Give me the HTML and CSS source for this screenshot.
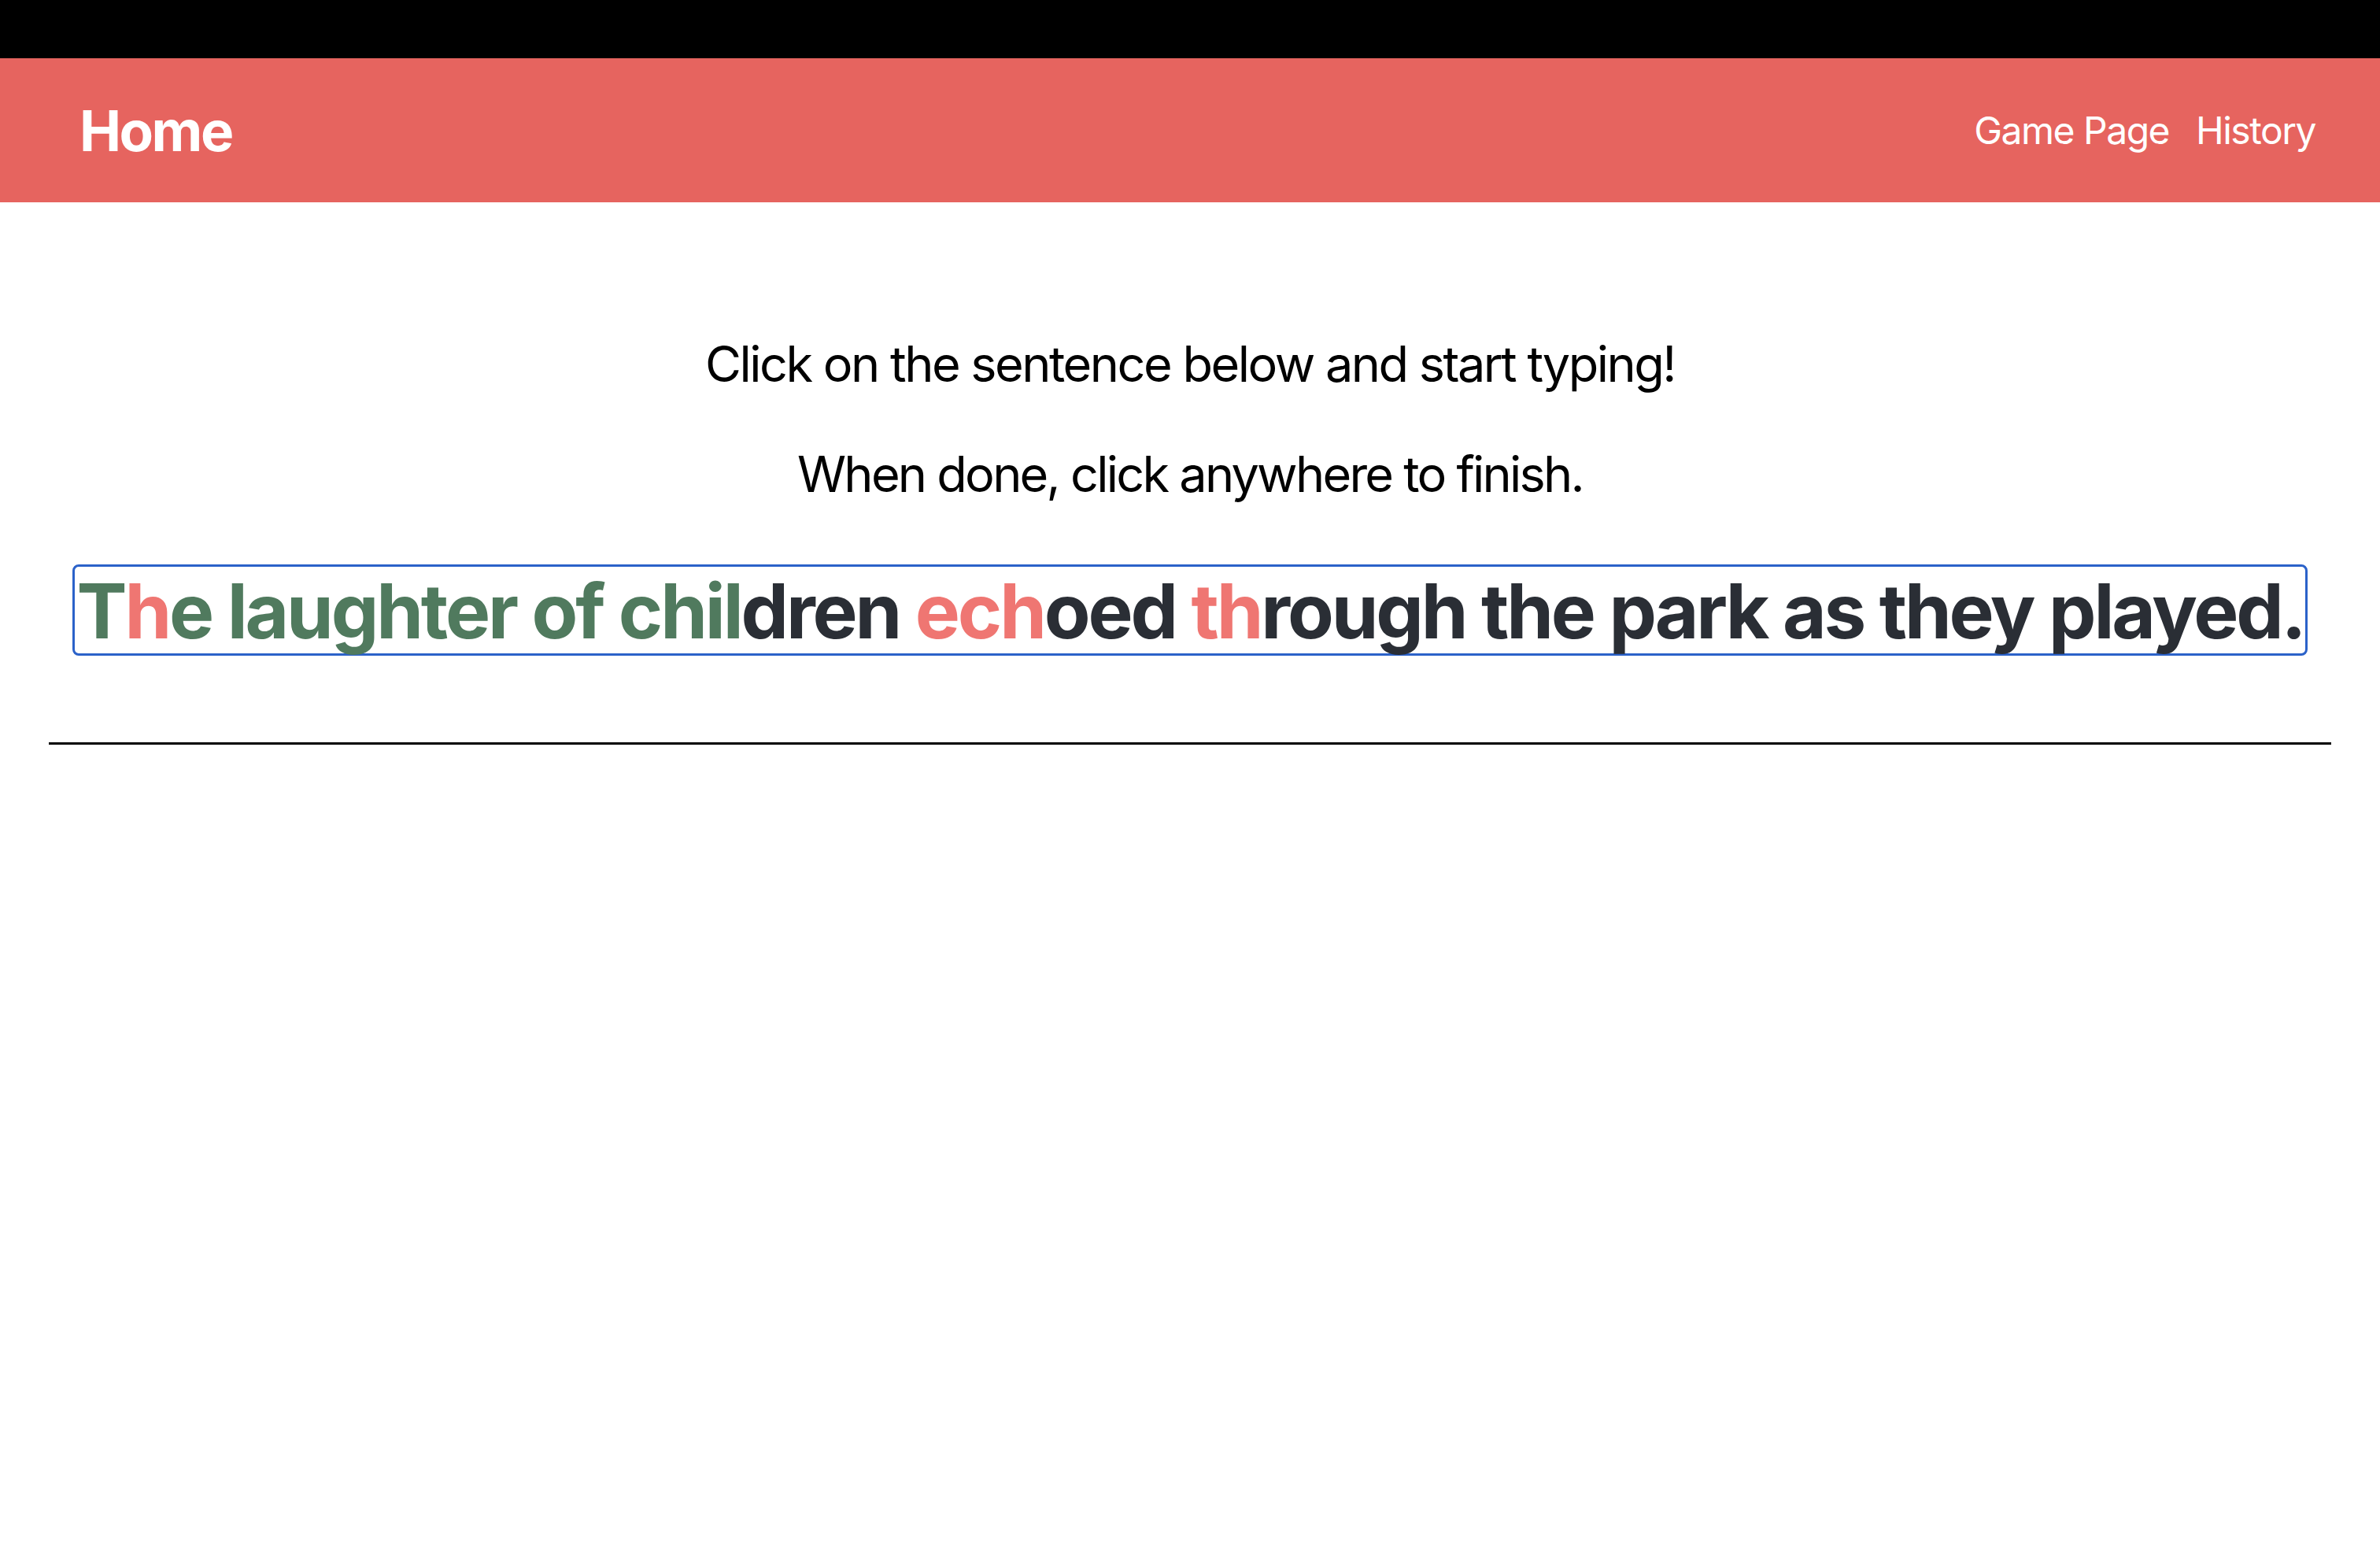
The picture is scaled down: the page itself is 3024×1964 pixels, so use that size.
FILE: index.html
```html
<!DOCTYPE html>
<html lang="en">
<head>
<meta charset="utf-8">
<title>Home</title>
<link rel="stylesheet" href="styles.css">
</head>
<body>
<div class="topbar"></div>
<nav class="navbar">
  <a class="brand" href="#">Home</a>
  <div class="links">
    <a class="link" href="#">Game Page</a>
    <a class="link" href="#">History</a>
  </div>
</nav>
<main class="main">
  <p class="instr">Click on the sentence below and start typing!</p>
  <p class="instr second">When done, click anywhere to finish.</p>
  <div class="sentence-wrap">
    <div class="sentence" tabindex="0"><span class="ok">T</span><span class="bad">h</span><span class="ok">e laughter of chil</span><span class="todo">dren </span><span class="bad">ech</span><span class="todo">oed </span><span class="bad">th</span><span class="todo">rough the park as they played.</span></div>
  </div>
  <hr class="rule">
</main>
</body>
</html>
```

FILE: styles.css
```css
html, body {
  margin: 0;
  padding: 0;
  background: #ffffff;
  font-family: Inter, "Noto Sans", "Liberation Sans", sans-serif;
}

.topbar {
  height: 74px;
  background: #000000;
}

.navbar {
  height: 183px;
  background: #e6645f;
  display: flex;
  align-items: center;
  justify-content: space-between;
  padding: 0 82px 0 101px;
  box-sizing: border-box;
}

.brand {
  color: #ffffff;
  text-decoration: none;
  font-weight: 700;
  font-size: 71px;
  letter-spacing: -2.5px;
}

.links {
  display: flex;
  gap: 34px;
}

.link {
  color: #ffffff;
  text-decoration: none;
  font-size: 48px;
  font-weight: 400;
  letter-spacing: -1.5px;
}

.main {
  padding-top: 157px;
  text-align: center;
}

.instr {
  margin: 0;
  font-size: 63px;
  line-height: 96px;
  color: #000000;
  letter-spacing: -2.5px;
}

.second {
  margin-top: 44px;
  letter-spacing: -2.75px;
}

.sentence-wrap {
  margin-top: 67px;
  display: flex;
  justify-content: center;
}

.sentence {
  display: inline-block;
  border: 3px solid #2b62c9;
  border-radius: 8px;
  font-size: 96px;
  font-weight: 700;
  line-height: 107px;
  padding: 3px 1px 0 2px;
  color: #2a2e35;
  letter-spacing: -3.15px;
  white-space: nowrap;
  outline: none;
}

.ok { color: #507a5e; }
.bad { color: #ef7672; }
.todo { color: #2a2e35; }

.rule {
  margin: 110px 62px 0;
  border: none;
  border-top: 3px solid #000000;
  height: 0;
}
```
